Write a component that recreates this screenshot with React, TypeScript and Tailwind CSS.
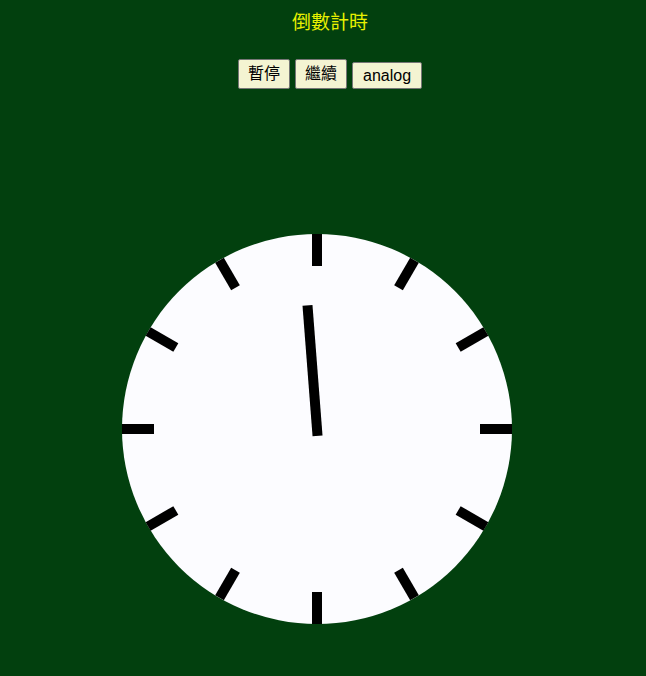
import React from "react";

const ticks = Array.from({ length: 12 }, (_, i) => i * 30);

function Clock() {
  const cx = 200;
  const cy = 200;
  const r = 195;
  return (
    <svg width={400} height={400} viewBox="0 0 400 400">
      <circle cx={cx} cy={cy} r={r} fill="#fcfcff" />
      {ticks.map((a) => (
        <line
          key={a}
          x1={cx}
          y1={cy - r}
          x2={cx}
          y2={cy - r + 32}
          stroke="#000"
          strokeWidth={10}
          transform={`rotate(${a} ${cx} ${cy})`}
        />
      ))}
      <line
        x1={cx}
        y1={cy + 7}
        x2={cx}
        y2={cy - 124}
        stroke="#000"
        strokeWidth={10}
        transform={`rotate(-4.4 ${cx} ${cy})`}
      />
    </svg>
  );
}

export default function App() {
  const btn =
    "border border-[#767676] bg-[#f4f4d2] text-[16px] text-black py-[3px] rounded-[2px]";
  return (
    <div
      className="w-[646px] h-[676px] bg-[#02400e] overflow-hidden"
      style={{ fontFamily: '"Liberation Sans", "Noto Sans CJK TC", sans-serif' }}
    >
      <div className="pl-[14px] flex flex-col items-center">
        <h1 className="pt-[9px] text-[19px] leading-[28px] text-[#e8f000]">倒數計時</h1>
        <div className="mt-[22px] flex items-end gap-[5px]">
          <button className={`${btn} px-[9px] leading-[22px]`}>暫停</button>
          <button className={`${btn} px-[9px] leading-[22px]`}>繼續</button>
          <button className={`${btn} px-[10px] leading-[19px]`}>analog</button>
        </div>
      </div>
      <div className="ml-[117px] mt-[140px]">
        <Clock />
      </div>
    </div>
  );
}
